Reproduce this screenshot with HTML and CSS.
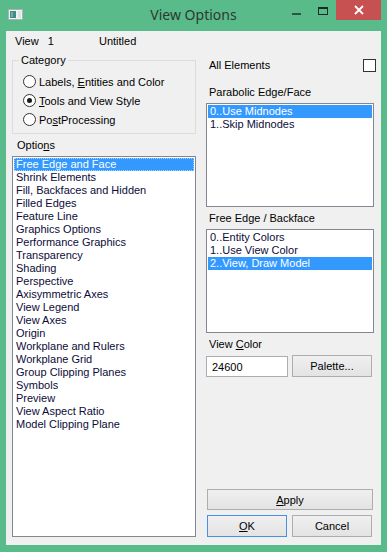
FILE: index.html
```html
<!DOCTYPE html>
<html lang="en">
<head>
  <meta charset="UTF-8">
  <title>View Options</title>
  <link rel="stylesheet" href="styles.css">
</head>
<body>
  <div class="window">
    <div class="titlebar">
      <div class="tb-left">
        <svg class="app-icon" width="15" height="11" viewBox="0 0 15 11">
          <rect x="0.5" y="0.5" width="14" height="10" fill="#f2f4f3" stroke="#a9b4b0"/>
          <rect x="2" y="2" width="6" height="7" fill="#3f8c86"/>
          <rect x="3" y="3" width="2" height="5" fill="#6fb0a8"/>
          <rect x="10" y="2" width="3" height="7" fill="#dfe4e2"/>
        </svg>
      </div>
      <div class="title">View Options</div>
      <div class="tb-buttons">
        <span class="tb-btn min"></span>
        <span class="tb-btn max"></span>
        <span class="tb-btn close">
          <svg width="10" height="10" viewBox="0 0 10 10">
            <path d="M1 1L9 9M9 1L1 9" stroke="#fff" stroke-width="1.8"/>
          </svg>
        </span>
      </div>
    </div>

    <div class="client">
      <div class="view-row">
        <span class="view-num">View&nbsp;&nbsp; 1</span>
        <span>Untitled</span>
      </div>

      <div class="main">
        <div class="col-left">
          <div class="group">
            <span class="legend">Category</span>
            <div class="radio"><span class="radio-mark"></span><span>Labels, <u>E</u>ntities and Color</span></div>
            <div class="radio"><span class="radio-mark on"></span><span><u>T</u>ools and View Style</span></div>
            <div class="radio"><span class="radio-mark"></span><span>Po<u>s</u>tProcessing</span></div>
          </div>

          <div class="label options-label">Optio<u>n</u>s</div>
          <ul class="listbox options">
            <li class="sel focus">Free Edge and Face</li>
            <li>Shrink Elements</li>
            <li>Fill, Backfaces and Hidden</li>
            <li>Filled Edges</li>
            <li>Feature Line</li>
            <li>Graphics Options</li>
            <li>Performance Graphics</li>
            <li>Transparency</li>
            <li>Shading</li>
            <li>Perspective</li>
            <li>Axisymmetric Axes</li>
            <li>View Legend</li>
            <li>View Axes</li>
            <li>Origin</li>
            <li>Workplane and Rulers</li>
            <li>Workplane Grid</li>
            <li>Group Clipping Planes</li>
            <li>Symbols</li>
            <li>Preview</li>
            <li>View Aspect Ratio</li>
            <li>Model Clipping Plane</li>
          </ul>
        </div>

        <div class="col-right">
          <div class="check-row">
            <span>All Elements</span>
            <span class="checkbox"></span>
          </div>

          <div class="label parabolic-label">Parabolic Edge/Face</div>
          <ul class="listbox small">
            <li class="sel">0..Use Midnodes</li>
            <li>1..Skip Midnodes</li>
          </ul>

          <div class="label">Free Edge / Backface</div>
          <ul class="listbox small">
            <li>0..Entity Colors</li>
            <li>1..Use View Color</li>
            <li class="sel">2..View, Draw Model</li>
          </ul>

          <div class="label">View <u>C</u>olor</div>
          <div class="color-row">
            <input class="color-input" type="text" value="24600">
            <button class="btn palette">Palette...</button>
          </div>

          <div class="actions">
            <button class="btn apply"><u>A</u>pply</button>
            <div class="ok-row">
              <button class="btn default"><u>O</u>K</button>
              <button class="btn">Cancel</button>
            </div>
          </div>
        </div>
      </div>
    </div>
  </div>
</body>
</html>
```

FILE: styles.css
```css
body {
  margin: 0;
}

.window {
  width: 387px;
  height: 552px;
  box-sizing: border-box;
  padding: 0 6px 7px;
  background-color: #5abb8a;
  display: flex;
  flex-direction: column;
  font-family: "Liberation Sans", Arial, sans-serif;
  font-size: 11px;
  color: #000;
}

/* title bar */
.titlebar {
  height: 31px;
  flex: none;
  display: grid;
  grid-template-columns: 1fr auto 1fr;
  align-items: start;
}
.tb-left {
  padding: 9px 0 0 2px;
}
.app-icon {
  display: block;
}
.title {
  font-family: "Noto Sans", sans-serif;
  font-size: 14px;
  line-height: 30px;
  color: #2e3833;
}
.tb-buttons {
  justify-self: end;
  display: flex;
}
.tb-btn {
  width: 26px;
  height: 20px;
  display: flex;
  align-items: center;
  justify-content: center;
}
.tb-btn.max {
  width: 27px;
}
.min::before {
  content: "";
  width: 9px;
  height: 2px;
  margin-top: 7px;
  background-color: #2e5443;
}
.max::before {
  content: "";
  width: 10px;
  height: 8px;
  box-sizing: border-box;
  border: 1px solid #1d2b25;
  border-top-width: 2px;
  margin-top: 2px;
}
.close {
  width: 45px;
  background-color: #c75050;
}
.close svg {
  display: block;
}

/* client area */
.client {
  flex: 1;
  background-color: #f0f0f0;
  padding: 4px 7px 8px 6px;
  display: flex;
  flex-direction: column;
}
.view-row {
  height: 13px;
  line-height: 13px;
  padding-left: 3px;
  display: flex;
}
.view-num {
  width: 84px;
  white-space: pre;
}
.main {
  flex: 1;
  display: flex;
  gap: 10px;
}
.col-left {
  width: 184px;
  display: flex;
  flex-direction: column;
}
.col-right {
  width: 168px;
  display: flex;
  flex-direction: column;
}

.label {
  line-height: 13px;
  height: 13px;
  padding-left: 3px;
  margin-top: 5px;
}
.options-label {
  padding-left: 5px;
}

/* category group */
.group {
  position: relative;
  margin-top: 12px;
  border: 1px solid #dcdcdc;
  padding: 11px 0 4px 10px;
}
.legend {
  position: absolute;
  top: -7px;
  left: 6px;
  padding: 0 2px;
  line-height: 13px;
  background-color: #f0f0f0;
}
.radio {
  height: 19px;
  display: flex;
  align-items: center;
}
.radio-mark {
  width: 13px;
  height: 13px;
  box-sizing: border-box;
  border: 1px solid #333;
  border-radius: 50%;
  background-color: #fff;
  margin-right: 3px;
  display: flex;
  align-items: center;
  justify-content: center;
}
.radio-mark.on::after {
  content: "";
  width: 5px;
  height: 5px;
  border-radius: 50%;
  background-color: #1a1a1a;
}

/* list boxes */
.listbox {
  list-style: none;
  margin: 4px 0 0;
  padding: 1px;
  border: 1px solid #828790;
  background-color: #fff;
  box-sizing: border-box;
}
.listbox li {
  height: 13px;
  line-height: 13px;
  padding-left: 2px;
  white-space: nowrap;
  color: #0c0c38;
}
.listbox li.sel {
  background-color: #3399ff;
  color: #fff;
}
.listbox li.focus {
  outline: 1px dotted #a8d2ff;
  outline-offset: -1px;
}
.options {
  flex: 1;
}
.small {
  height: 104px;
}

/* right column */
.check-row {
  margin-top: 11px;
  margin-right: -2px;
  height: 13px;
  line-height: 13px;
  padding-left: 3px;
  display: flex;
  justify-content: space-between;
}
.checkbox {
  width: 13px;
  height: 13px;
  box-sizing: border-box;
  border: 1px solid #333;
  background-color: #fff;
}
.parabolic-label {
  margin-top: 14px;
}
.color-row {
  margin-top: 4px;
  display: flex;
  gap: 4px;
  align-items: flex-start;
}
.color-input {
  width: 82px;
  height: 21px;
  margin: 1px 0 0;
  box-sizing: border-box;
  border: 1px solid #abadb3;
  padding: 0 0 0 5px;
  font-family: "Liberation Sans", Arial, sans-serif;
  font-size: 11px;
  color: #000;
  background-color: #fff;
  outline: none;
}

.btn {
  width: 80px;
  height: 22px;
  box-sizing: border-box;
  border: 1px solid #adadad;
  background: linear-gradient(#f0f0f0, #e3e3e3);
  font-family: "Liberation Sans", Arial, sans-serif;
  font-size: 11px;
  color: #000;
  padding: 0;
  margin: 0;
}
.btn.default {
  border-color: #4a90e2;
}
.actions {
  margin-top: auto;
  display: flex;
  flex-direction: column;
  gap: 5px;
}
.btn.apply {
  width: 166px;
  height: 21px;
  margin-left: 1px;
}
.ok-row {
  display: flex;
  gap: 5px;
  padding-left: 1px;
}
```
